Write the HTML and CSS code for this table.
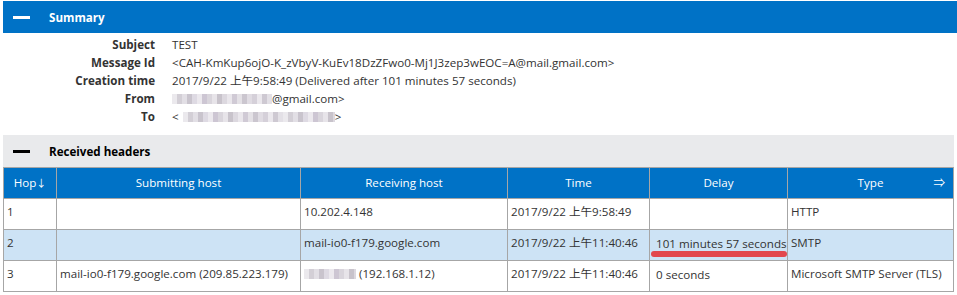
FILE: index.html
```html
<!DOCTYPE html>
<html>
<head>
    <title>Message Header Analyzer</title>
    <meta charset="utf-8">
    <link rel="stylesheet" href="styles.css">
</head>
<body>
    <div class="panel">
        <!-- Summary -->
        <div class="bar bar-blue"><span class="toggle"></span>Summary</div>
        <div class="summary">
            <div class="label">Subject</div><div class="value">TEST</div>
            <div class="label">Message Id</div><div class="value">&lt;CAH-KmKup6ojO-K_zVbyV-KuEv18DzZFwo0-Mj1J3zep3wEOC=A@mail.gmail.com&gt;</div>
            <div class="label">Creation time</div><div class="value">2017/9/22 上午9:58:49 (Delivered after 101 minutes 57 seconds)</div>
            <div class="label">From</div><div class="value"><span class="mosaic w-from"></span>@gmail.com&gt;</div>
            <div class="label">To</div><div class="value">&lt;<span class="mosaic w-to"></span>&gt;</div>
        </div>

        <!-- Received headers -->
        <div class="bar bar-gray"><span class="toggle"></span>Received headers</div>
        <table class="hops">
            <colgroup>
                <col style="width: 53px">
                <col style="width: 244px">
                <col style="width: 207px">
                <col style="width: 142px">
                <col style="width: 138px">
                <col>
            </colgroup>
            <thead>
                <tr>
                    <th>Hop<span class="arrow">↓</span></th>
                    <th>Submitting host</th>
                    <th>Receiving host</th>
                    <th>Time</th>
                    <th>Delay</th>
                    <th class="type">Type<span class="swap">⇒</span></th>
                </tr>
            </thead>
            <tbody>
                <tr>
                    <td>1</td>
                    <td></td>
                    <td>10.202.4.148</td>
                    <td>2017/9/22 上午9:58:49</td>
                    <td class="delay"></td>
                    <td>HTTP</td>
                </tr>
                <tr class="selected">
                    <td>2</td>
                    <td></td>
                    <td>mail-io0-f179.google.com</td>
                    <td>2017/9/22 上午11:40:46</td>
                    <td class="delay marked">101 minutes 57 seconds</td>
                    <td>SMTP</td>
                </tr>
                <tr>
                    <td>3</td>
                    <td>mail-io0-f179.google.com (209.85.223.179)</td>
                    <td><span class="mosaic w-host"></span> (192.168.1.12)</td>
                    <td>2017/9/22 上午11:40:46</td>
                    <td class="delay">0 seconds</td>
                    <td>Microsoft SMTP Server (TLS)</td>
                </tr>
            </tbody>
        </table>
    </div>
</body>
</html>
```

FILE: styles.css
```css
:root {
    --blue: #0072c6;
    --gray: #e9eaec;
    --line: #a6a6a6;
    --text: #333;
}

body {
    margin: 0;
    background: #fff;
    font-family: 'Open Sans', 'Noto Sans CJK TC', sans-serif;
    font-size: 11.6px;
    color: var(--text);
}

.panel {
    margin: 1px 0 0 3px;
    width: 951px;
}

/* Section bars */
.bar {
    height: 32px;
    display: flex;
    align-items: center;
    font-weight: 700;
}

.bar-blue {
    width: 954px;
    background: var(--blue);
    color: #fff;
}

.bar-gray {
    background: var(--gray);
    color: #000;
    margin-top: 9px;
}

.toggle {
    width: 17px;
    height: 3px;
    margin: 0 19px 0 10px;
    background: currentColor;
}

/* Summary */
.summary {
    display: grid;
    grid-template-columns: 152px 1fr;
    column-gap: 17px;
    padding-top: 3px;
    line-height: 18px;
}

.summary .label {
    text-align: right;
    font-weight: 700;
}

/* Pixelated (redacted) address parts */
.mosaic {
    display: inline-block;
    height: 10px;
    vertical-align: -1px;
    background:
        linear-gradient(90deg,
            #ebe9ed 0 5px, #d3cfd6 5px 10px, #e2dfe5 10px 15px, #c9c4cd 15px 20px,
            #dedae3 20px 25px, #ece9ee 25px 30px, #cdc6d3 30px 35px, #d9d5dc 35px 40px,
            #e7e4e9 40px 45px, #c8c3cb 45px 50px, #dcd8df 50px 55px, #eae7ec 55px 60px,
            #d0cad5 60px 65px, #e4e1e6 65px 70px, #cbc6cf 70px 75px, #e0dce3 75px 80px,
            #d5d0d9 80px 85px, #ebe8ed 85px 90px, #cec9d2 90px 95px, #e3e0e6 95px 100px);
    background-size: 100px 100%;
}

.w-from { width: 100px; }
.w-to { width: 152px; margin-left: 4px; }
.w-host { width: 52px; }

/* Received headers table */
.hops {
    width: 951px;
    border-collapse: collapse;
    table-layout: fixed;
    line-height: 16px;
}

.hops tr {
    height: 31px;
}

.hops th,
.hops td {
    border: 1px solid var(--line);
    padding: 0 3px;
    white-space: nowrap;
}

.hops th {
    background: var(--blue);
    color: #fff;
    font-weight: 400;
    text-align: center;
}

.arrow {
    font-size: 10px;
}

.hops th.type {
    position: relative;
}

.swap {
    position: absolute;
    right: 8px;
    top: 7px;
}

.hops td {
    padding-top: 5px;
    vertical-align: top;
}

.hops tr.selected td {
    background: #cde3f5;
}

.hops td.delay {
    padding: 6px 6px 0;
}

.hops td.marked {
    position: relative;
}

.hops td.marked::after {
    content: '';
    position: absolute;
    left: 1px;
    right: 0;
    bottom: 3px;
    height: 6px;
    border-radius: 3px;
    background: #e2474c;
}
```
